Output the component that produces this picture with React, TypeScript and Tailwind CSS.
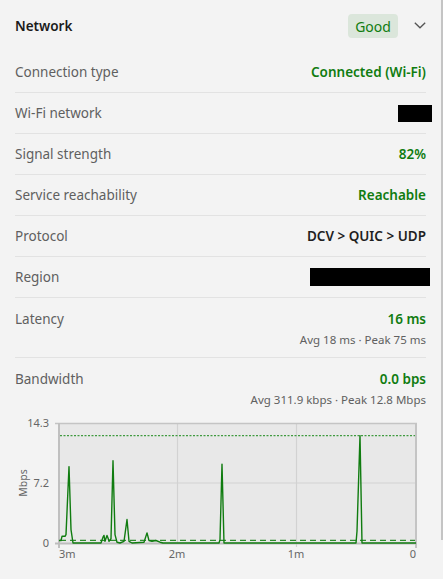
import { ReactNode } from "react";

type Row = { label: string; value?: ReactNode; tone?: "good" | "plain" };

const rows: Row[] = [
  { label: "Connection type", value: "Connected (Wi-Fi)", tone: "good" },
  { label: "Wi-Fi network", value: <span className="block h-[17px] w-[34px] bg-black translate-x-[6px]" /> },
  { label: "Signal strength", value: "82%", tone: "good" },
  { label: "Service reachability", value: "Reachable", tone: "good" },
  { label: "Protocol", value: "DCV > QUIC > UDP", tone: "plain" },
  { label: "Region", value: <span className="block h-[18px] w-[120px] bg-black translate-x-[4px]" /> },
];

// samples as [x px, Mbps]
const samples: [number, number][] = [
  [59, 0.3], [61, 0.3], [62, 0.8], [65, 0.8], [66, 1.0], [69, 9.1], [71, 1.6], [73, 0],
  [101, 0], [103, 0.7], [104, 0.9], [105, 0.2], [107, 0.9], [108, 0.6], [109, 0.2], [111, 0.5],
  [113, 9.8], [115, 1.0], [117, 0.1], [120, 0], [124, 0.2], [127, 2.8], [129, 0.2], [132, 0],
  [144, 0.1], [147, 1.2], [149, 0.3], [152, 0.2], [156, 0.3], [160, 0.1], [163, 0],
  [219, 0], [220, 0.4], [222, 9.4], [224, 0],
  [356, 0], [357, 1.4], [360, 12.8], [362, 0], [416, 0],
];

const Y0 = 543;
const Y1 = 423;
const MAX = 14.3;
const yOf = (v: number) => Y0 - (v / MAX) * (Y0 - Y1);

function Chart() {
  const pts = samples.map(([x, v]) => `${x},${yOf(v).toFixed(1)}`).join(" ");
  const peak = yOf(12.8);
  const avg = yOf(0.3119);
  return (
    <svg width={443} height={170} viewBox="0 409 443 170" className="block" fontFamily="'Segoe UI','Noto Sans',sans-serif">
      <rect x={59} y={423} width={357} height={120} fill="#e8e8e8" />
      {/* grid */}
      <line x1={59} x2={416} y1={483} y2={483} stroke="#d2d2d2" strokeWidth={1.2} />
      <line x1={177.5} x2={177.5} y1={423} y2={543} stroke="#d2d2d2" strokeWidth={1.2} />
      <line x1={296.5} x2={296.5} y1={423} y2={547} stroke="#d2d2d2" strokeWidth={1.2} />
      {/* frame */}
      <line x1={55} x2={417} y1={423.5} y2={423.5} stroke="#c4c4c4" strokeWidth={1.5} />
      <line x1={416} x2={416} y1={423} y2={548} stroke="#c4c4c4" strokeWidth={2} />
      <line x1={59} x2={59} y1={423} y2={548} stroke="#c0c0c0" strokeWidth={2} />
      <line x1={55} x2={417} y1={543.5} y2={543.5} stroke="#bdbdbd" strokeWidth={2} />
      {/* peak / avg */}
      <line x1={60} x2={415} y1={peak} y2={peak} stroke="#3f9a3f" strokeWidth={1.2} strokeDasharray="2 1.5" />
      <line x1={60} x2={415} y1={avg} y2={avg} stroke="#2e8b2e" strokeWidth={1.3} strokeDasharray="6 4" />
      <polyline points={pts} fill="none" stroke="#107c10" strokeWidth={1.4} strokeLinejoin="round" />
      {/* y labels */}
      <g fontSize={11} fill="#666" textAnchor="end">
        <text x={49} y={427}>14.3</text>
        <text x={49} y={487}>7.2</text>
        <text x={49} y={547}>0</text>
      </g>
      <text x={27} y={483} fontSize={10.5} fill="#666" textAnchor="middle" transform="rotate(-90 27 483)">
        Mbps
      </text>
      {/* x labels */}
      <g fontSize={11} fill="#666">
        <text x={59} y={558}>3m</text>
        <text x={177} y={558} textAnchor="middle">2m</text>
        <text x={296} y={558} textAnchor="middle">1m</text>
        <text x={416} y={558} textAnchor="end">0</text>
      </g>
    </svg>
  );
}

export default function App() {
  return (
    <div className="relative w-[443px] h-[579px] overflow-hidden bg-[#f3f3f3] font-['Segoe_UI','Noto_Sans',sans-serif] text-[13.5px]">
      <div className="pl-[15px] pr-[17px]">
        <div className="flex h-[52px] items-center justify-between">
          <div className="text-[13.5px] font-semibold text-[#1b1b1b]">Network</div>
          <div className="flex items-center gap-[16px]">
            <span className="flex h-[24px] w-[50px] items-center justify-center rounded-[4px] bg-[#dbe6db] text-[14px] text-[#107c10]">
              Good
            </span>
            <svg width={12} height={7} viewBox="0 0 12 7" className="mt-[-1px]">
              <path d="M0.8 0.8 L6 5.8 L11.2 0.8" fill="none" stroke="#555" strokeWidth={1.3} />
            </svg>
          </div>
        </div>

        {rows.map((r) => (
          <div key={r.label} className="flex h-[41px] items-center justify-between border-b border-[#e2e2e2]">
            <span className="text-[#5f5f5f]">{r.label}</span>
            {typeof r.value === "string" ? (
              <span className={r.tone === "good" ? "font-semibold text-[#107c10]" : "font-semibold text-[#1f1f1f]"}>
                {r.value}
              </span>
            ) : (
              r.value
            )}
          </div>
        ))}

        <div className="border-b border-[#e2e2e2] pt-[11px] pb-[9px]">
          <div className="flex h-[20px] items-center justify-between">
            <span className="text-[#5f5f5f]">Latency</span>
            <span className="font-semibold text-[#107c10]">16 ms</span>
          </div>
          <div className="mt-[3px] h-[16px] text-right text-[11.5px] leading-[16px] text-[#606060]">
            Avg 18 ms · Peak 75 ms
          </div>
        </div>

        <div className="pt-[11px]">
          <div className="flex h-[20px] items-center justify-between">
            <span className="text-[#5f5f5f]">Bandwidth</span>
            <span className="font-semibold text-[#107c10]">0.0 bps</span>
          </div>
          <div className="mt-[3px] h-[16px] text-right text-[11.5px] leading-[16px] text-[#606060]">
            Avg 311.9 kbps · Peak 12.8 Mbps
          </div>
        </div>
      </div>

      <div className="mt-[1px]">
        <Chart />
      </div>

      <div className="absolute right-0 top-0 h-[540px] w-[2px] bg-[#c4c4c4]" />
    </div>
  );
}
